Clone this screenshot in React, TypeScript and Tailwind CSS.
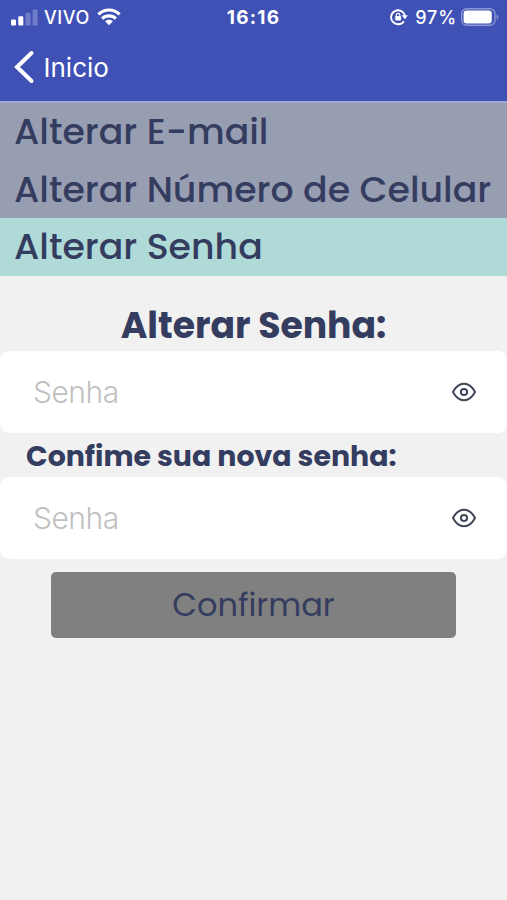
import { useState } from "react";

const poppins = "font-['Poppins','Inter',sans-serif]";

const SignalIcon = () => (
  <svg width="27" height="17" viewBox="0 0 27 17" fill="#fff">
    <rect x="0" y="10.5" width="5" height="6" rx="1.3" />
    <rect x="7.3" y="7.3" width="5" height="9.2" rx="1.3" />
    <rect x="14.6" y="3.8" width="5" height="12.7" rx="1.3" opacity="0.25" />
    <rect x="21.6" y="0.5" width="5" height="16" rx="1.3" opacity="0.25" />
  </svg>
);

const WifiIcon = () => (
  <svg width="24" height="18" viewBox="0 0 24 18" fill="none" stroke="#fff" strokeWidth="3.1">
    <path d="M1.4 6.4C7.3 .6 16.7 .6 22.6 6.4" />
    <path d="M5.1 10.6C9 6.9 15 6.9 18.9 10.6" />
    <path d="M8.1 13.3C10.3 11.3 13.7 11.3 15.9 13.3L12 17.2Z" fill="#fff" stroke="none" />
  </svg>
);

const RotationLockIcon = () => (
  <svg width="18" height="18" viewBox="0 0 18 18" fill="none" stroke="#fff">
    <path d="M13.9 13.2A7 7 0 1 1 14.9 7.6" strokeWidth="1.9" />
    <path d="M11.6 7.3H17.8L15 11.3Z" fill="#fff" stroke="none" />
    <rect x="5.2" y="7.9" width="5.8" height="4.5" rx="0.7" fill="#fff" stroke="none" />
    <path d="M6.4 8.2V7a1.7 1.7 0 0 1 3.4 0V8.2" strokeWidth="1.2" />
  </svg>
);

const BatteryIcon = () => (
  <svg width="38" height="18" viewBox="0 0 38 18">
    <rect x="0.7" y="0.7" width="33.3" height="16.6" rx="5" fill="none" stroke="#fff" strokeOpacity="0.4" strokeWidth="1.4" />
    <rect x="2.6" y="2.6" width="28.2" height="12.8" rx="3.2" fill="#fff" />
    <path d="M35.7 6.3C37.8 7 37.8 11 35.7 11.7Z" fill="#fff" fillOpacity="0.4" />
  </svg>
);

const EyeIcon = () => (
  <svg width="24" height="20" viewBox="0 0 24 20" fill="none" stroke="#43475a" strokeWidth="2" strokeLinejoin="round">
    <path d="M1 10C6.6-.9 17.4-.9 23 10C17.4 20.9 6.6 20.9 1 10Z" />
    <circle cx="12" cy="10" r="3.1" />
  </svg>
);

const menuItems = ["Alterar E-mail", "Alterar Número de Celular", "Alterar Senha"];

const PasswordField = () => {
  const [visible, setVisible] = useState(false);

  return (
    <div className="flex h-[82px] items-center rounded-[9px] bg-white pl-[33px] pr-[31.5px]">
      <input
        type={visible ? "text" : "password"}
        placeholder="Senha"
        className="min-w-0 flex-1 bg-transparent font-['Inter',sans-serif] text-[30px] font-light tracking-[-0.5px] text-[#343c5f] outline-none placeholder:text-[#c0c0c0]"
      />
      <button type="button" aria-label="Mostrar senha" onClick={() => setVisible(!visible)}>
        <EyeIcon />
      </button>
    </div>
  );
};

const App = () => {
  const [active, setActive] = useState(2);

  return (
    <div className={`min-h-screen bg-[#f1f1f1] text-[#343c5f] ${poppins}`}>
      {/* Header */}
      <header className="h-[103px] border-b-2 border-[#a3a8d0] bg-[#3f51b5] font-['Inter',sans-serif] text-white">
        <div className="grid h-[34px] grid-cols-3 items-center text-[18px] leading-none">
          <div className="flex items-center pl-[11px]">
            <SignalIcon />
            <span className="ml-[6px] pt-px font-medium tracking-[0.6px]">VIVO</span>
            <span className="ml-[7px]"><WifiIcon /></span>
          </div>
          <span className="text-center text-[19px] font-bold tracking-[1.2px]">16:16</span>
          <div className="flex items-center justify-end pr-[8px]">
            <RotationLockIcon />
            <span className="ml-[7px] mr-[4px] pt-px font-medium tracking-[0.9px]">97%</span>
            <BatteryIcon />
          </div>
        </div>
        <div className="flex h-[66px] items-center pl-[14px]">
          <svg width="21" height="34" viewBox="0 0 21 34" fill="none" stroke="#fff" strokeWidth="4" strokeLinecap="round">
            <path d="M17.5 3L3 17L17.5 31" />
          </svg>
          <span className="ml-[8.5px] text-[26px]">Inicio</span>
        </div>
      </header>

      {/* Menu */}
      <nav>
        {menuItems.map((item, index) => (
          <button
            key={item}
            type="button"
            onClick={() => setActive(index)}
            className={`flex h-[57.5px] w-full items-center whitespace-nowrap pl-[14px] pt-[1.5px] text-[36.3px] font-medium ${
              index === active ? "bg-[#afdad8]" : "bg-[#989eb2]"
            }`}
          >
            {item}
          </button>
        ))}
      </nav>

      {/* Form */}
      <form onSubmit={(e) => e.preventDefault()}>
        <h1 className="flex h-[75.5px] items-end justify-center pb-[3px] text-[36.2px] font-bold leading-[44px]">
          Alterar Senha:
        </h1>
        <PasswordField />
        <h2 className="flex h-11 items-center pl-[26px] pt-[2px] text-[28.4px] font-bold">
          Confime sua nova senha:
        </h2>
        <PasswordField />
        <button
          type="submit"
          className="ml-[51px] mt-[13px] h-[66px] w-[405px] rounded-[5px] bg-[#808080] text-[32px]"
        >
          Confirmar
        </button>
      </form>
    </div>
  );
};

export default App;
